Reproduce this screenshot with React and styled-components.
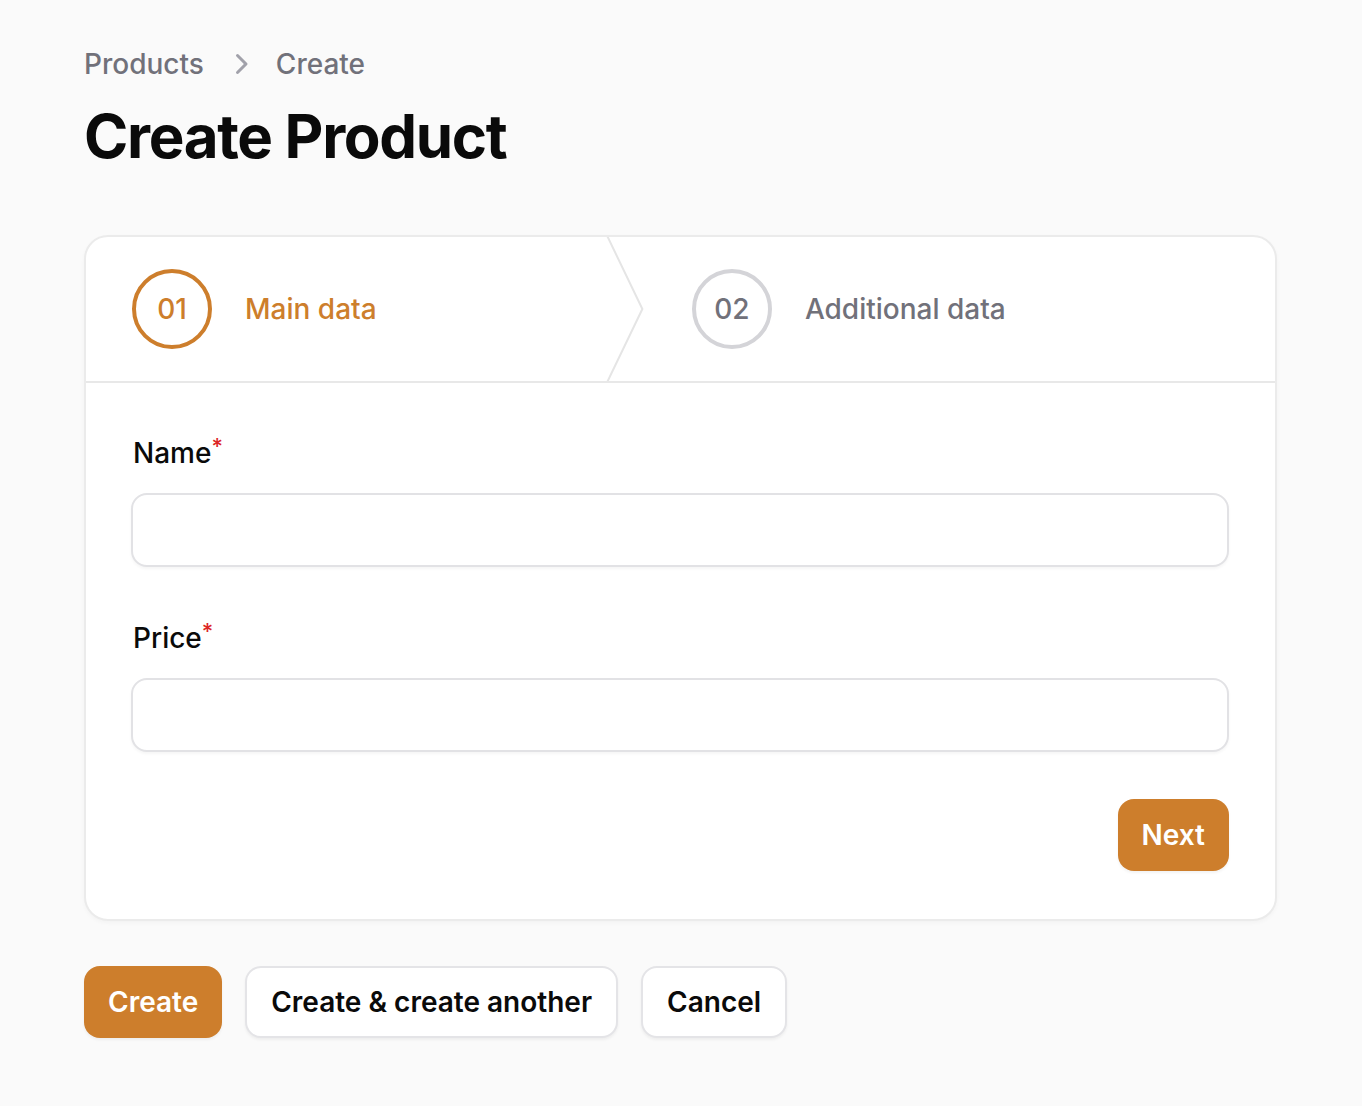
import styled, { createGlobalStyle } from "styled-components";

const ORANGE = "#cd7e2c";

const GlobalStyle = createGlobalStyle`
  html, body {
    margin: 0;
    background: #fafafa;
    font-family: Inter, "Noto Sans", "Liberation Sans", sans-serif;
    color: #0a0a0a;
  }
  * { box-sizing: border-box; }
`;

const steps = [
  { id: "01", label: "Main data", active: true },
  { id: "02", label: "Additional data", active: false },
];

const fields = ["Name", "Price"];

export default function App() {
  return (
    <Page>
      <GlobalStyle />
      <Breadcrumbs>
        <Crumb>Products</Crumb>
        <CrumbArrow viewBox="0 0 20 20" fill="currentColor">
          <path
            fillRule="evenodd"
            d="M8.22 5.22a.75.75 0 0 1 1.06 0l4.25 4.25a.75.75 0 0 1 0 1.06l-4.25 4.25a.75.75 0 0 1-1.06-1.06L11.94 10 8.22 6.28a.75.75 0 0 1 0-1.06Z"
          />
        </CrumbArrow>
        <Crumb>Create</Crumb>
      </Breadcrumbs>
      <Title>Create Product</Title>

      <Card>
        <StepList>
          {steps.map((step, i) => (
            <Step key={step.id}>
              <StepCircle $active={step.active}>{step.id}</StepCircle>
              <StepLabel $active={step.active}>{step.label}</StepLabel>
              {i < steps.length - 1 && (
                <StepDivider viewBox="0 0 22 80" fill="none" preserveAspectRatio="none">
                  <path
                    d="M0 -2L20 40L0 82"
                    stroke="currentColor"
                    strokeWidth="2"
                    strokeLinejoin="round"
                    vectorEffect="non-scaling-stroke"
                  />
                </StepDivider>
              )}
            </Step>
          ))}
        </StepList>

        <Body>
          {fields.map((f) => (
            <Field key={f}>
              <Label>
                {f}
                <Required>*</Required>
              </Label>
              <Input type="text" />
            </Field>
          ))}
          <Actions>
            <Button $primary>Next</Button>
          </Actions>
        </Body>
      </Card>

      <Footer>
        <Button $primary>Create</Button>
        <Button>Create &amp; create another</Button>
        <Button>Cancel</Button>
      </Footer>
    </Page>
  );
}

const Page = styled.div`
  padding: 44px 85px 60px 84px;
  display: flex;
  flex-direction: column;
`;

const Breadcrumbs = styled.nav`
  display: flex;
  align-items: center;
  gap: 16px;
  height: 40px;
`;

const Crumb = styled.span`
  font-size: 28px;
  line-height: 40px;
  font-weight: 500;
  color: #71717a;
`;

const CrumbArrow = styled.svg`
  width: 40px;
  height: 40px;
  color: #a1a1aa;
`;

const Title = styled.h1`
  margin: 16px 0 0;
  font-size: 60px;
  line-height: 72px;
  font-weight: 700;
  letter-spacing: -0.022em;
  color: #0a0a0a;
`;

const Card = styled.div`
  margin-top: 63px;
  background: #fff;
  border: 2px solid #ebebeb;
  border-radius: 24px;
  box-shadow: 0 2px 4px rgba(0, 0, 0, 0.03);
  overflow: hidden;
`;

const StepList = styled.ol`
  display: grid;
  grid-auto-flow: column;
  margin: 0;
  padding: 0;
  list-style: none;
  border-bottom: 2px solid #e8e8e8;
`;

const Step = styled.li`
  position: relative;
  display: flex;
  align-items: center;
  gap: 33px;
  padding: 32px 46px;
`;

const StepCircle = styled.span`
  flex-shrink: 0;
  width: 80px;
  height: 80px;
  border-radius: 50%;
  border: 4px solid ${({ $active }) => ($active ? ORANGE : "#d4d4d8")};
  display: flex;
  align-items: center;
  justify-content: center;
  font-size: 28px;
  font-weight: 500;
  color: ${({ $active }) => ($active ? ORANGE : "#71717a")};
`;

const StepLabel = styled.span`
  font-size: 28px;
  line-height: 40px;
  font-weight: 500;
  color: ${({ $active }) => ($active ? ORANGE : "#71717a")};
`;

const StepDivider = styled.svg`
  position: absolute;
  right: 0;
  top: 0;
  width: 40px;
  height: 100%;
  color: #e5e5e5;
`;

const Body = styled.div`
  padding: 50px 46px 48px 45px;
  display: flex;
  flex-direction: column;
  gap: 51px;
`;

const Field = styled.div`
  display: flex;
  flex-direction: column;
  gap: 20px;
`;

const Label = styled.label`
  display: block;
  height: 40px;
  font-size: 28px;
  line-height: 40px;
  font-weight: 500;
  color: #0a0a0a;
  padding-left: 2px;
`;

const Required = styled.span`
  position: relative;
  top: -9px;
  color: #dc2626;
  font-weight: 500;
  font-size: 22px;
  line-height: 0;
`;

const Input = styled.input`
  height: 74px;
  width: 100%;
  border: 2px solid #e2e2e5;
  border-radius: 16px;
  background: #fff;
  box-shadow: 0 2px 3px rgba(0, 0, 0, 0.04);
  font: inherit;
  font-size: 28px;
  padding: 0 24px;
  outline: none;
`;

const Actions = styled.div`
  display: flex;
  justify-content: flex-end;
  margin-top: -4px;
`;

const Button = styled.button`
  height: 72px;
  padding: 0 24px;
  border-radius: 16px;
  font-family: inherit;
  font-size: 28px;
  font-weight: 600;
  cursor: pointer;
  background: ${({ $primary }) => ($primary ? ORANGE : "#fff")};
  color: ${({ $primary }) => ($primary ? "#fff" : "#0a0a0a")};
  border: ${({ $primary }) => ($primary ? "none" : "2px solid #e4e4e7")};
  box-shadow: 0 2px 3px rgba(0, 0, 0, 0.05);
`;

const Footer = styled.div`
  display: flex;
  gap: 23px;
  margin-top: 45px;
`;
